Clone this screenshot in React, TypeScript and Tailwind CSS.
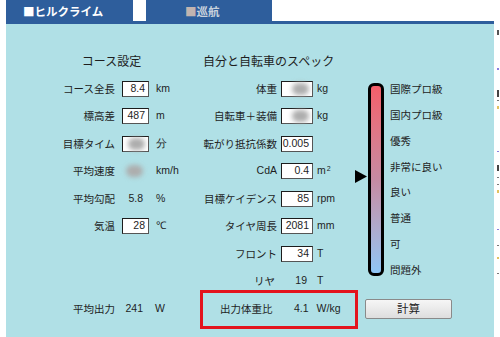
import { clsx } from "clsx";

type Row = {
  label: string;
  kind: "input" | "text" | "blurInput" | "blurText";
  value?: string;
  unit?: React.ReactNode;
};

const COURSE: Row[] = [
  { label: "コース全長", kind: "input", value: "8.4", unit: "km" },
  { label: "標高差", kind: "input", value: "487", unit: "m" },
  { label: "目標タイム", kind: "blurInput", unit: "分" },
  { label: "平均速度", kind: "blurText", unit: "km/h" },
  { label: "平均勾配", kind: "text", value: "5.8", unit: "%" },
  { label: "気温", kind: "input", value: "28", unit: "℃" },
];

const SPEC: Row[] = [
  { label: "体重", kind: "blurInput", unit: "kg" },
  { label: "自転車＋装備", kind: "blurInput", unit: "kg" },
  { label: "転がり抵抗係数", kind: "input", value: "0.005" },
  {
    label: "CdA",
    kind: "input",
    value: "0.4",
    unit: (
      <span>
        m<sup className="text-[7px] ml-[1px]">2</sup>
      </span>
    ),
  },
  { label: "目標ケイデンス", kind: "input", value: "85", unit: "rpm" },
  { label: "タイヤ周長", kind: "input", value: "2081", unit: "mm" },
  { label: "フロント", kind: "input", value: "34", unit: "T" },
  { label: "リヤ", kind: "text", value: "19", unit: "T" },
];

const LEVELS = ["国際プロ級", "国内プロ級", "優秀", "非常に良い", "良い", "普通", "可", "問題外"];

// bits of the neighbouring column that peek in at the right edge
const EDGE_MARKS = [
  { top: "mt-[30px]", color: "bg-[#555]", size: "h-[5px]" },
  { top: "mt-[33px]", color: "bg-[#8a7ee0]", size: "h-[2px]" },
  { top: "mt-[20px]", color: "bg-[#444]", size: "h-[7px]" },
  { top: "mt-[3px]", color: "bg-[#777]", size: "h-[1px]" },
  { top: "mt-[5px]", color: "bg-[#e2c260]", size: "h-[3px]" },
  { top: "mt-[42px]", color: "bg-[#8a7ee0]", size: "h-[1px]" },
  { top: "mt-[13px]", color: "bg-[#444]", size: "h-[6px]" },
  { top: "mt-[6px]", color: "bg-[#777]", size: "h-[1px]" },
  { top: "mt-[6px]", color: "bg-[#777]", size: "h-[1px]" },
  { top: "mt-[5px]", color: "bg-[#e2c260]", size: "h-[3px]" },
  { top: "mt-[36px]", color: "bg-[#8a7ee0]", size: "h-[1px]" },
  { top: "mt-[15px]", color: "bg-[#777]", size: "h-[1px]" },
  { top: "mt-[11px]", color: "bg-[#e2c260]", size: "h-[2px]" },
  { top: "mt-[14px]", color: "bg-[#777]", size: "h-[1px]" },
];

const NUM = "font-['Liberation_Sans',sans-serif] text-[10.5px]";

function Blur() {
  return <span className="block w-[17px] h-[12px] rounded-full bg-[#adadad] blur-[2.5px]" />;
}

function Value({ row, w }: { row: Row; w: string }) {
  if (row.kind === "input" || row.kind === "blurInput") {
    return (
      <div
        className={clsx(
          "h-[16px] bg-white border border-[#1c1c1c] border-r-[#555] border-b-[#555] flex items-center justify-end pr-[3px]",
          NUM,
          w
        )}
      >
        {row.kind === "input" ? row.value : <Blur />}
      </div>
    );
  }
  return (
    <div className={clsx("h-[16px] flex items-center justify-end pr-[6px]", NUM, w)}>
      {row.kind === "text" ? row.value : <Blur />}
    </div>
  );
}

export default function App() {
  return (
    <div className="relative w-[500px] h-[337px] overflow-hidden bg-white text-[#1e1e1e] font-['Noto_Sans_CJK_JP',sans-serif]">
      <div className="flex">
        <div className="w-[488px] ml-[6px]">
          {/* Tabs */}
          <div className="flex h-[21px]">
            <div className="w-[127px] bg-[#2e5e9c] text-white text-[11.5px] font-bold flex items-center pl-[17px] pt-[2px]">
              ■ヒルクライム
            </div>
            <div className="w-[126px] ml-[13px] bg-[#2e5e9c] text-[#c9d2dc] text-[11.5px] font-bold flex items-center pl-[39px] pt-[2px]">
              <span className="text-[#c2b4b0]">■</span>巡航
            </div>
          </div>
          <div className="h-[3px] bg-[#2e5e9c]" />

          {/* Panel */}
          <div className="h-[313px] bg-[#b0e0e6] pt-[29px] pl-[14px]">
            <div className="flex">
              {/* Course settings */}
              <div className="w-[176px]">
                <div className="h-[22px] leading-[16px] text-[12px] text-center pl-[7px]">コース設定</div>
                {COURSE.map((r) => (
                  <div key={r.label} className="h-[27.5px] flex items-center text-[10.5px]">
                    <div className="w-[95px] text-right">{r.label}</div>
                    <div className="ml-[7px]">
                      <Value row={r} w="w-[27px]" />
                    </div>
                    <div className={clsx("ml-[7px]", NUM)}>{r.unit}</div>
                  </div>
                ))}
              </div>

              {/* Rider & bike spec */}
              <div className="w-[157px]">
                <div className="h-[22px] leading-[16px] text-[12px] pl-[7px] whitespace-nowrap">自分と自転車のスペック</div>
                {SPEC.map((r) => (
                  <div key={r.label} className="h-[27.5px] flex items-center text-[10.5px]">
                    <div className={clsx("w-[81px] text-right whitespace-nowrap", r.label === "CdA" && NUM, r.label === "リヤ" && "pr-[2px]")}>
                      {r.label}
                    </div>
                    <div className="ml-[4px]">
                      <Value row={r} w="w-[32px]" />
                    </div>
                    <div className={clsx("ml-[4px]", NUM)}>{r.unit}</div>
                  </div>
                ))}
              </div>

              {/* Scale */}
              <div className="flex mt-[30px]">
                <div className="w-[12px] ml-[2px] pt-[87px]">
                  <svg width="12" height="13" viewBox="0 0 12 13">
                    <polygon points="0,0 12,6.5 0,13" fill="#000" />
                  </svg>
                </div>
                <div className="w-[16px] h-[193px] ml-[1px] rounded-[6px] border-[3px] border-black bg-linear-to-b from-[#f45e6a] via-[#c58aa2] to-[#8ec6f6]" />
                <div className="ml-[6px] mt-[-7px] flex flex-col">
                  {LEVELS.map((l) => (
                    <div key={l} className="h-[25.86px] flex items-center text-[10.5px] whitespace-nowrap">
                      {l}
                    </div>
                  ))}
                </div>
              </div>
            </div>

            {/* Bottom row */}
            <div className="flex items-center mt-[-6px] h-[40px]">
              <div className="w-[176px] flex items-center text-[10.5px]">
                <div className="w-[95px] text-right">平均出力</div>
                <div className={clsx("ml-[7px] w-[27px] text-right pr-[6px]", NUM)}>241</div>
                <div className={clsx("ml-[6px]", NUM)}>W</div>
              </div>
              <div className="ml-[4px] w-[158px] h-[39px] border-[3px] border-[#e3141d] flex items-center text-[10.5px]">
                <div className="ml-[17px] w-[60px]">出力体重比</div>
                <div className={clsx("ml-[14px]", NUM)}>4.1</div>
                <div className={clsx("ml-[8px]", NUM)}>W/kg</div>
              </div>
              <div className="ml-[7px] w-[87px] h-[20px] border border-[#8a8a8a] rounded-[2px] bg-linear-to-b from-[#f6f6f6] to-[#dedede] flex items-center justify-center text-[11.5px]">
                計算
              </div>
            </div>
          </div>
        </div>

        {/* Cut-off neighbouring content */}
        <div className="w-[6px] flex flex-col pl-[3px]">
          {EDGE_MARKS.map((m, i) => (
            <div key={i} className={clsx("w-[2px]", m.top, m.color, m.size)} />
          ))}
        </div>
      </div>
    </div>
  );
}
